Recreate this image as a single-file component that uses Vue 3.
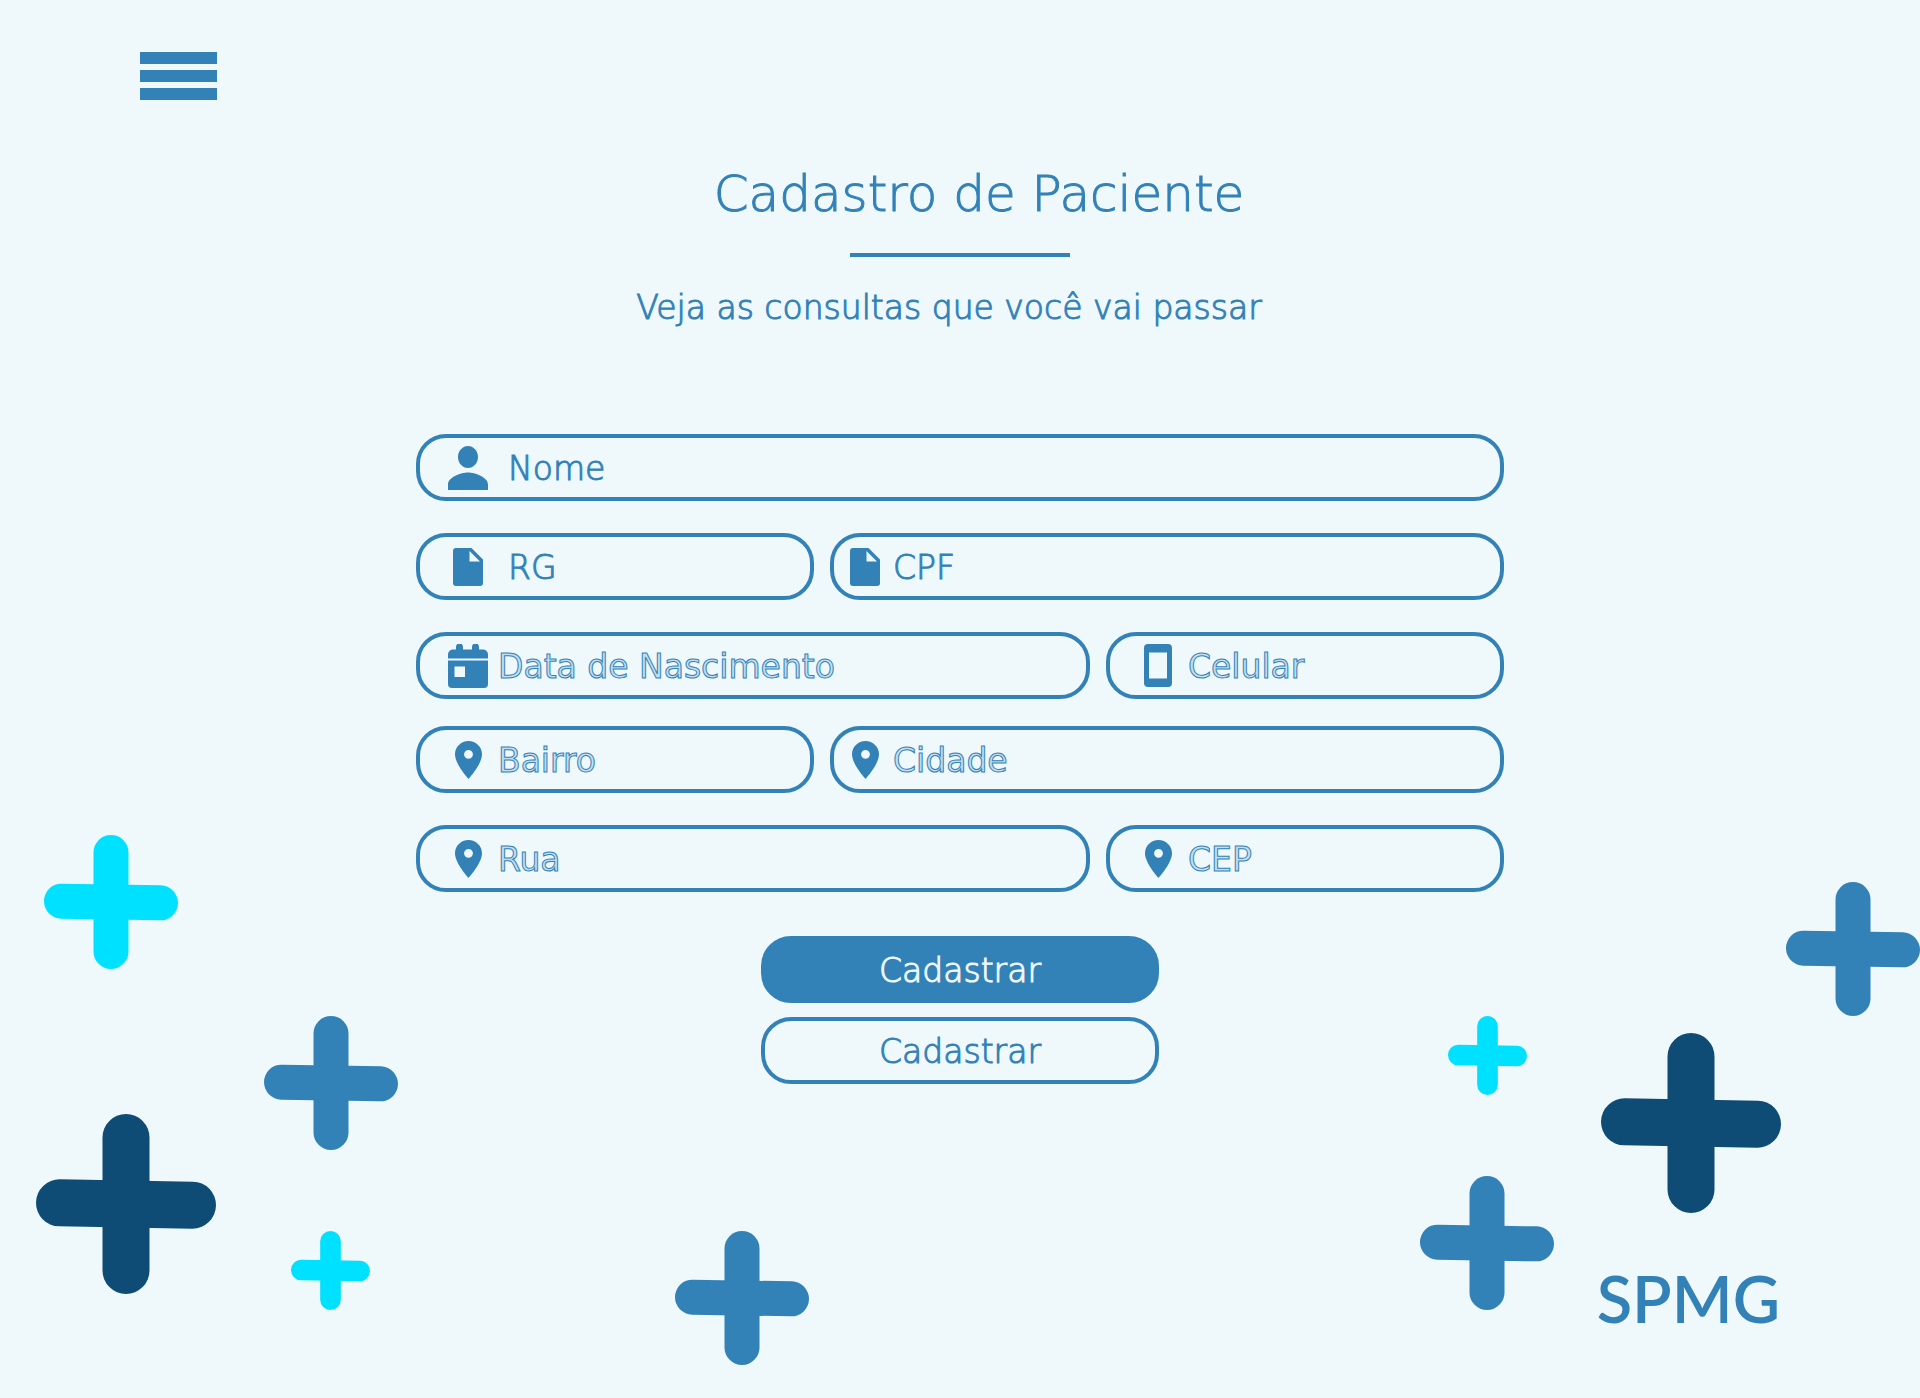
<script setup>
import { reactive } from 'vue'

const icons = {
  person: {
    width: 40,
    height: 44,
    box: '4 4 16 16',
    path: 'M12 12c2.21 0 4-1.79 4-4s-1.79-4-4-4-4 1.79-4 4 1.79 4 4 4zm0 1.6c-2.67 0-8 1.6-8 4.4v2h16v-2c0-2.8-5.33-4.4-8-4.4z',
  },
  document: {
    width: 30,
    height: 38,
    box: '0 0 30 38',
    path: 'M3 0H18.500L30 11.500V35a3 3 0 0 1-3 3H3a3 3 0 0 1-3-3V3a3 3 0 0 1 3-3zM16.500 3v10.500H27z',
  },
  calendar: {
    width: 40,
    height: 44,
    box: '0 0 40 44',
    path: 'M5 5.500h3V3a3 3 0 0 1 7 0v2.500h9V3a3 3 0 0 1 7 0v2.500h4a5 5 0 0 1 5 5v4H0v-4a5 5 0 0 1 5-5zM0 16.500h40V40a4 4 0 0 1-4 4H4a4 4 0 0 1-4-4zM6.500 22.500v10.500h10.500V22.500z',
  },
  phone: {
    width: 28,
    height: 43,
    box: '0 0 28 43',
    path: 'M4 0h20a4 4 0 0 1 4 4v35a4 4 0 0 1-4 4H4a4 4 0 0 1-4-4V4a4 4 0 0 1 4-4zM5 8.500v26h18v-26z',
  },
  pin: {
    width: 27,
    height: 38,
    box: '5 2 14 20',
    path: 'M12 2C8.130 2 5 5.130 5 9c0 5.250 7 13 7 13s7-7.750 7-13c0-3.870-3.130-7-7-7zm0 9.300a2.300 2.300 0 1 1 0-4.600 2.300 2.300 0 0 1 0 4.600z',
  },
}

const groups = [
  [
    { layout: 'single', fields: [{ id: 'nome', label: 'Nome', icon: 'person', look: 'solid' }] },
    {
      layout: 'narrow-wide',
      fields: [
        { id: 'rg', label: 'RG', icon: 'document', look: 'solid' },
        { id: 'cpf', label: 'CPF', icon: 'document', look: 'solid compact' },
      ],
    },
    {
      layout: 'wide-narrow',
      fields: [
        { id: 'nascimento', label: 'Data de Nascimento', icon: 'calendar', look: 'outline' },
        { id: 'celular', label: 'Celular', icon: 'phone', look: 'outline' },
      ],
    },
  ],
  [
    {
      layout: 'narrow-wide',
      fields: [
        { id: 'bairro', label: 'Bairro', icon: 'pin', look: 'outline' },
        { id: 'cidade', label: 'Cidade', icon: 'pin', look: 'outline compact' },
      ],
    },
    {
      layout: 'wide-narrow',
      fields: [
        { id: 'rua', label: 'Rua', icon: 'pin', look: 'outline' },
        { id: 'cep', label: 'CEP', icon: 'pin', look: 'outline' },
      ],
    },
  ],
]

const patient = reactive({
  nome: '', rg: '', cpf: '', nascimento: '', celular: '', bairro: '', cidade: '', rua: '', cep: '',
})

const crosses = ['a', 'b', 'c', 'd', 'e', 'f', 'g', 'h', 'i']
</script>

<template>
  <div class="page">
    <svg v-for="name in crosses" :key="name" class="cross" :class="'cross-' + name" viewBox="0 0 134 134" aria-hidden="true">
      <rect x="49.500" y="0" width="35" height="134" rx="17.500" />
      <rect x="0" y="49.500" width="134" height="35" rx="17.500" transform="rotate(1 67 67)" />
    </svg>

    <nav class="nav">
      <button class="menu" type="button" aria-label="Menu">
        <span></span><span></span><span></span>
      </button>
    </nav>

    <main class="content">
      <h1>Cadastro de Paciente</h1>
      <hr />
      <p class="subtitle">Veja as consultas que você vai passar</p>

      <form class="form" @submit.prevent>
        <div v-for="(rows, g) in groups" :key="g" class="group">
          <div v-for="(row, r) in rows" :key="r" class="row" :class="row.layout">
            <label v-for="f in row.fields" :key="f.id" class="field" :class="f.look" :for="f.id">
              <span class="icon">
                <svg
                  :width="icons[f.icon].width"
                  :height="icons[f.icon].height"
                  :viewBox="icons[f.icon].box"
                  preserveAspectRatio="none"
                  aria-hidden="true"
                >
                  <path fill-rule="evenodd" :d="icons[f.icon].path" />
                </svg>
              </span>
              <input :id="f.id" v-model="patient[f.id]" type="text" :placeholder="f.label" :aria-label="f.label" />
            </label>
          </div>
        </div>

        <div class="actions">
          <button class="action filled" type="submit">Cadastrar</button>
          <button class="action" type="button">Cadastrar</button>
        </div>
      </form>
    </main>

    <footer class="footer">SPMG</footer>
  </div>
</template>

<style>
body {
  background: #eff8fb;
}
</style>

<style scoped>
.page {
  --blue: #3282b8;
  --navy: #0f4c75;
  --cyan: #00e1ff;
  --paper: #eff8fb;
  position: relative;
  display: flex;
  flex-direction: column;
  box-sizing: border-box;
  min-height: 100vh;
  padding: 52px 140px 60px;
  overflow: hidden;
  background: var(--paper);
  color: var(--blue);
  font-family: "DejaVu Sans", sans-serif;
}

.nav {
  display: flex;
}

.menu {
  display: flex;
  flex-direction: column;
  gap: 6px;
  width: 77px;
  padding: 0;
  border: 0;
  background: none;
  cursor: pointer;
}

.menu span {
  height: 12px;
  background: var(--blue);
}

.content {
  position: relative;
  display: flex;
  flex-direction: column;
  align-items: center;
  padding-top: 64px;
}

h1 {
  margin: 0;
  padding-left: 38px;
  font-size: 50px;
  font-weight: 200;
  line-height: 60px;
  -webkit-text-stroke: 1px var(--blue);
}

hr {
  width: 220px;
  height: 4px;
  margin: 29px 0 31px;
  border: 0;
  background: var(--blue);
}

.subtitle {
  margin: 0;
  padding-right: 22px;
  font-size: 33px;
  font-weight: 200;
  line-height: 40px;
  -webkit-text-stroke: 1px var(--blue);
}

.form {
  display: flex;
  flex-direction: column;
  gap: 27px;
  width: 100%;
  max-width: 1088px;
  margin-top: 106px;
}

.group {
  display: flex;
  flex-direction: column;
  gap: 32px;
}

.row {
  display: grid;
  gap: 16px;
}

.narrow-wide {
  grid-template-columns: 398fr 674fr;
}

.wide-narrow {
  grid-template-columns: 674fr 398fr;
}

.field {
  display: flex;
  align-items: center;
  gap: 10px;
  box-sizing: border-box;
  min-width: 0;
  height: 67px;
  padding: 0 28px;
  border: 4px solid var(--blue);
  border-radius: 30px;
}

.field.solid {
  gap: 20px;
}

.field.compact {
  gap: 8px;
  padding-left: 11px;
}

.icon {
  display: flex;
  flex: none;
  justify-content: center;
  width: 40px;
}

.icon svg {
  display: block;
  fill: var(--blue);
}

input {
  flex: 1;
  min-width: 0;
  height: 48px;
  padding: 2px 0 0;
  border: 0;
  outline: 0;
  background: none;
  color: var(--blue);
  font-family: inherit;
  font-size: 33px;
  font-weight: 200;
  -webkit-text-stroke: 1px var(--blue);
}

input::placeholder {
  color: var(--blue);
  opacity: 1;
}

.outline input {
  font-weight: 400;
}

.outline input::placeholder {
  color: #c3deee;
}

.actions {
  display: flex;
  flex-direction: column;
  align-items: center;
  gap: 14px;
  margin-top: 17px;
}

.action {
  width: 398px;
  max-width: 100%;
  height: 67px;
  padding: 2px 0 0;
  border: 4px solid var(--blue);
  border-radius: 30px;
  background: none;
  color: var(--blue);
  font-family: inherit;
  font-size: 33px;
  font-weight: 200;
  -webkit-text-stroke: 1px currentColor;
  cursor: pointer;
}

.action.filled {
  background: var(--blue);
  color: var(--paper);
}

.footer {
  position: relative;
  margin-top: auto;
  text-align: right;
  font-family: Lato, sans-serif;
  font-size: 65px;
  font-weight: 600;
  line-height: 80px;
}

/* Decorative crosses scattered behind the form */
.cross {
  position: absolute;
  width: 134px;
  height: 134px;
  overflow: visible;
  fill: var(--blue);
}

.cross-a { left: 44px; top: 835px; fill: var(--cyan); }
.cross-b { left: 264px; top: 1016px; }
.cross-c { left: 36px; top: 1114px; width: 180px; height: 180px; fill: var(--navy); }
.cross-d { left: 291px; top: 1231px; width: 79px; height: 79px; fill: var(--cyan); }
.cross-e { left: 675px; top: 1231px; }
.cross-f { right: 0; top: 882px; }
.cross-g { right: 393px; top: 1016px; width: 79px; height: 79px; fill: var(--cyan); }
.cross-h { right: 139px; top: 1033px; width: 180px; height: 180px; fill: var(--navy); }
.cross-i { right: 366px; top: 1176px; }
</style>
